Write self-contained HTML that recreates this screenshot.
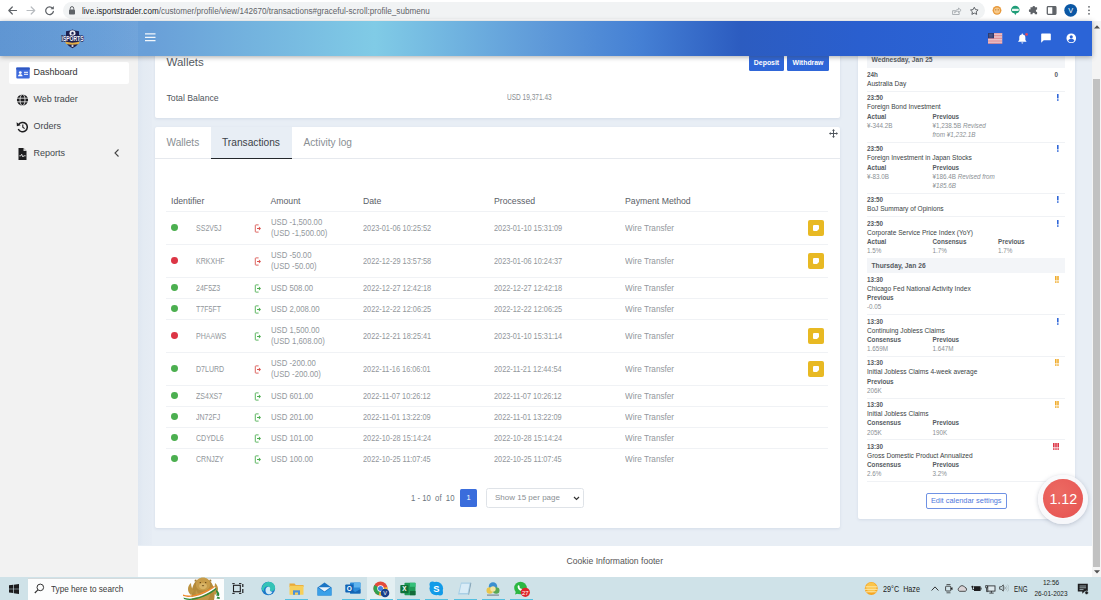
<!DOCTYPE html>
<html lang="en">
<head>
<meta charset="utf-8">
<title>Transactions</title>
<style>
*{box-sizing:border-box}
html,body{margin:0;padding:0}
body{width:1101px;height:600px;position:relative;overflow:hidden;background:#e8eef5;font-family:"Liberation Sans",sans-serif;color:#6c757d;font-size:8px}
.abs{position:absolute}
/* browser chrome */
#chrome{position:absolute;left:0;top:0;width:1101px;height:21px;background:#fff}
#urlpill{position:absolute;left:63px;top:2px;width:922px;height:17px;border-radius:9px;background:#f1f3f4}
#url{position:absolute;left:82px;top:5.5px;transform:scaleX(.978);transform-origin:0 50%;font-size:8.3px;line-height:11px;color:#5f6368;white-space:nowrap}
#url b{font-weight:normal;color:#202124}
/* header */
#header{position:absolute;left:0;top:21px;width:1091.5px;height:34.8px;background:linear-gradient(90deg,#6ba2da 0,#699fd8 150px,#80cbe6 375px,#5f9ad9 540px,#4580d4 640px,#2c5cc0 740px,#2a5fcf 860px,#2b64d7 980px,#2b64d7 100%);box-shadow:0 1px 5px rgba(60,62,66,.45);z-index:5}
#header .sb{position:absolute;left:0;top:0;width:138px;height:34.8px;background:linear-gradient(90deg,rgba(50,100,180,.2),rgba(80,130,200,.05) 70%,rgba(255,255,255,.05))}
/* sidebar */
#sidebar{position:absolute;left:0;top:55px;width:138px;height:522px;background:#f2f2f2}
#sideshadow{position:absolute;left:138px;top:55px;width:14px;height:490px;background:linear-gradient(90deg,#dfe7f1,#e4ebf3 40%,#e6ecf4)}
.nav{position:absolute;left:9px;width:120px;height:22px;border-radius:2px;font-size:9px;line-height:20.600px;color:#42474c;padding-left:24.500px;white-space:nowrap}
.nav.act{background:#fff;color:#333}
.nav svg{position:absolute;left:7px;top:5px}
/* cards */
.card{position:absolute;background:#fff;border-radius:2px;box-shadow:0 1px 3px rgba(120,140,170,.18)}
.btn{position:absolute;background:#2f66d8;color:#fff;font-size:6.9px;line-height:16px;text-align:center;border-radius:1.5px;font-weight:bold}
/* table */
.t{position:absolute;white-space:nowrap;font-size:8.8px;line-height:11px;color:#92979c;transform:scaleX(.88);transform-origin:0 50%}
.th{position:absolute;white-space:nowrap;font-size:8.7px;line-height:11px;color:#5a6067}
.hl{position:absolute;left:166px;width:662px;height:1px;background:#f0f2f5}
.dot{position:absolute;left:171.3px;width:6.9px;height:6.9px;border-radius:50%;margin-top:.3px}
.g{background:#4caf50}.r{background:#dc3545}
.note{position:absolute;left:808px;width:16px;height:16px;border-radius:2px;background:#e8b923}
.note i{position:absolute;left:4.6px;top:4.6px;width:6.8px;height:6.8px;background:#fff;border-radius:1px}
.note i:after{content:"";position:absolute;right:0;bottom:0;border-style:solid;border-width:0 0 2.4px 2.4px;border-color:transparent transparent #e8b923 transparent}
.t.i{transform:scaleX(.8)}.t.d{transform:scaleX(.835)}.t.w{transform:scaleX(.93)}
/* calendar panel */
#cal{position:absolute;left:858px;top:50px;width:216.5px;height:469px;background:#fff;border-radius:2px;box-shadow:0 1px 3px rgba(120,140,170,.18)}
.c{position:absolute;white-space:nowrap;font-size:6.3px;line-height:9px}
.cb{font-weight:bold;color:#555a61}
.cn{color:#3a3f45;font-size:6.6px}
.cv{color:#8a8f94}
.band{position:absolute;left:9px;width:197.5px;height:14.8px;background:#f3f5f8}
.sep{position:absolute;left:9px;width:197.5px;height:1px;background:#f0f2f5}
/* footer + taskbar */
#footer{position:absolute;left:138px;top:545.7px;width:953.5px;height:31.3px;background:#fff;text-align:center;font-size:8.6px;line-height:31px;color:#555}
#taskbar{position:absolute;left:0;top:577px;width:1101px;height:23px;background:#cfe2e8}
#scroll{position:absolute;left:1091.5px;top:21px;width:9.5px;height:556px;background:#f4f4f4}
#scroll i{position:absolute;left:1.8px;top:58px;width:6.4px;height:487.7px;background:#c1c1c1}
.tb{position:absolute;white-space:nowrap;color:#222;font-size:8px}
</style>
</head>
<body>
<div id="chrome">
  <div id="urlpill"></div>
  <svg class="abs" style="left:0;top:0" width="62" height="21" viewBox="0 0 62 21">
    <g fill="none" stroke="#5f6368" stroke-width="1.2" stroke-linecap="round" stroke-linejoin="round">
      <path d="M16.5 10.5H9M12.3 7l-3.5 3.5 3.500 3.500"/>
    </g>
    <g fill="none" stroke="#b8bcc0" stroke-width="1.2" stroke-linecap="round" stroke-linejoin="round">
      <path d="M27 10.5h7.500M31.200 7l3.500 3.500-3.500 3.500"/>
    </g>
    <g fill="none" stroke="#5f6368" stroke-width="1.25" stroke-linecap="round">
      <path d="M52.600 8.200A3.900 3.900 0 1 0 53.400 11.500"/>
    </g>
    <path d="M53.800 6v3.300h-3.300z" fill="#5f6368"/>
  </svg>
  <svg class="abs" style="left:68px;top:5px" width="8" height="11" viewBox="0 0 8 11"><rect x="1" y="4.500" width="6" height="5" rx=".8" fill="#5f6368"/><path d="M2.300 4.700V3.300a1.700 1.700 0 0 1 3.400 0v1.400" fill="none" stroke="#5f6368" stroke-width="1"/></svg>
  <svg class="abs" style="left:948px;top:3px" width="36" height="15" viewBox="0 0 36 15">
    <g fill="none" stroke="#a4a9ae" stroke-width=".9" stroke-linejoin="round" stroke-linecap="round">
      <path d="M7.300 7.700H4.600v3.800h6.600v-1.800"/><path d="M6.800 9.500c.3-2 1.700-3 3.700-3.100V5l2.600 2.300-2.600 2.300V8.200c-1.600 0-2.700.4-3.700 1.300z"/>
    </g>
    <path d="M26.300 4.200l1.200 2.400 2.600.4-1.900 1.800.5 2.600-2.400-1.300-2.400 1.300.5-2.600-1.900-1.800 2.600-.4z" fill="none" stroke="#5f6368" stroke-width="1" stroke-linejoin="round"/>
  </svg>
  <svg class="abs" style="left:988px;top:3px" width="113" height="16" viewBox="0 0 113 16">
    <circle cx="9" cy="7.300" r="4.400" fill="#e89a3c"/><circle cx="9" cy="7.500" r="3" fill="#f7c98a"/><circle cx="7.800" cy="6.800" r=".6" fill="#a8621a"/><circle cx="10.200" cy="6.800" r=".6" fill="#a8621a"/>
    <path d="M23 7a4.300 4.300 0 0 1 8.600 0c0 2-2 3.300-3.300 3.300l-1 2-1-2C25 10.300 23 9 23 7z" fill="#1f9d78"/><rect x="24" y="5.800" width="6.600" height="2.200" rx=".5" fill="#e8f5f0"/>
    <path d="M42 5.500h2a1.300 1.300 0 1 1 2.600 0h2v2.300a1.300 1.300 0 1 0 0 2.600v2.100h-2.300a1.200 1.200 0 1 0-2.300 0H42v-2.300a1.300 1.300 0 1 1 0-2.500z" fill="#5f6368" transform="translate(.5 -1.300)"/>
    <rect x="59.300" y="3.700" width="8.600" height="7.600" rx=".8" fill="none" stroke="#5f6368" stroke-width="1.300"/><rect x="64.300" y="3.700" width="3.600" height="7.600" fill="#5f6368"/>
    <circle cx="82.700" cy="7.300" r="6.400" fill="#0b57a4"/>
    <text x="82.700" y="9.900" font-size="7.300" fill="#fff" text-anchor="middle" font-family="Liberation Sans, sans-serif">V</text>
    <circle cx="101" cy="3.800" r=".9" fill="#5f6368"/><circle cx="101" cy="7.300" r=".9" fill="#5f6368"/><circle cx="101" cy="10.800" r=".9" fill="#5f6368"/>
  </svg>

  <div id="url"><b>live.isportstrader.com</b>/customer/profile/view/142670/transactions#graceful-scroll:profile_submenu</div>
</div>
<div id="header"><div class="sb"></div>
  <svg class="abs" style="left:59.500px;top:8px" width="25" height="20" viewBox="0 0 25 20">
    <path d="M12.500 .5c2.500 1.200 4.500 1.700 6.500 1.700v9.300c0 3.600-3 6-6.500 7.800C9 17.500 6 15.100 6 11.500V2.200c2 0 4-.5 6.500-1.700z" fill="#1d1f4f"/>
    <circle cx="12.500" cy="4.300" r="3" fill="#e9ebf2"/><path d="M12.500 2.800l1.400 1-.5 1.600h-1.800l-.5-1.600z" fill="#1d1f4f"/>
    <text x="12.500" y="11.800" font-size="6.600" font-weight="bold" fill="#f4f5fa" stroke="#1d1f4f" stroke-width="1.300" paint-order="stroke" text-anchor="middle" font-family="Liberation Sans, sans-serif" textLength="22" lengthAdjust="spacingAndGlyphs">iSPORTS</text>
    <path d="M5 12.600c5 1.400 10 1.400 15 0l-1.200 2.500c-4.200 1-8.400 1-12.600 0z" fill="#e0ad48"/>
    <path d="M12.500 15.600l.5 1h1l-.8.700.3 1-1-.6-1 .6.300-1-.8-.7h1z" fill="#e9ebf2"/>
  </svg>
  <svg class="abs" style="left:144.500px;top:11.800px" width="11" height="9" viewBox="0 0 11 9"><path d="M0 .9h10.500M0 4.300h10.500M0 7.700h10.500" stroke="#fff" stroke-width="1.300" opacity=".92"/></svg>
  <svg class="abs" style="left:988px;top:11.800px" width="14.500" height="11" viewBox="0 0 14.500 11">
    <rect width="14.200" height="10.600" fill="#f1e6ea"/>
    <path d="M0 .8h14.200M0 2.400h14.200M0 4h14.200M0 5.600h14.200M0 7.200h14.200M0 8.800h14.200M0 10.300h14.200" stroke="#d9707a" stroke-width=".8"/>
    <rect width="6" height="5.300" fill="#2f3a6e"/>
    <path d="M1 1.300h4M1 2.700h4M1 4h4" stroke="#9aa3c8" stroke-width=".5" stroke-dasharray=".6 .6"/>
  </svg>
  <svg class="abs" style="left:1016.500px;top:10.700px" width="13" height="13" viewBox="0 0 14 14">
    <path d="M5.700 2.600a3.300 3.300 0 0 1 3.300 3.300v2.800l1.200 1.400v.5H1.200v-.5l1.200-1.400V5.900a3.300 3.300 0 0 1 3.300-3.300z" fill="#fff"/><path d="M4.600 11.200h2.200a1.100 1.100 0 0 1-2.200 0z" fill="#fff"/><circle cx="5.700" cy="2.300" r=".8" fill="#fff"/>
    <circle cx="10.300" cy="2.600" r="1.500" fill="#e24a5a"/>
  </svg>
  <svg class="abs" style="left:1041px;top:12px" width="10" height="10" viewBox="0 0 11 11"><path d="M1 .5h9a.8.800 0 0 1 .8.800v6a.8.800 0 0 1-.8.800H3L.2 10.700V1.300A.8.800 0 0 1 1 .5z" fill="#fff"/></svg>
  <svg class="abs" style="left:1065.700px;top:11.800px" width="10.500" height="10.500" viewBox="0 0 11.400 11.400"><circle cx="5.700" cy="5.700" r="5.200" fill="#fff"/><circle cx="5.700" cy="4.200" r="1.700" fill="#2a62d6"/><path d="M2.300 8.300c.7-1.500 2-2 3.400-2s2.700.5 3.400 2a4.300 4.300 0 0 1-6.800 0z" fill="#2a62d6"/></svg>
</div>
<div id="sidebar">
  <div class="nav act" style="top:7px"><svg width="14" height="12" viewBox="0 0 14 12" style="left:6.500px;top:4.500px"><rect x=".3" y=".6" width="13.400" height="10.800" rx="1" fill="#3f6bdc"/><rect x=".3" y=".6" width="13.400" height="2" fill="#2f57c0"/><circle cx="4.300" cy="5.600" r="1.400" fill="#fff"/><path d="M2 9.300c.2-1.400 1-2 2.300-2s2.100.6 2.300 2z" fill="#fff"/><rect x="8" y="4.800" width="4" height="1" fill="#fff"/><rect x="8" y="6.800" width="4" height="1" fill="#fff"/></svg>Dashboard</div>
  <div class="nav" style="top:34px"><svg width="14" height="12" viewBox="0 0 14 12"><circle cx="6.500" cy="6" r="5.600" fill="#1d1d1f"/><g fill="none" stroke="#f2f2f2" stroke-width=".8"><ellipse cx="6.500" cy="6" rx="2.500" ry="5.600"/><path d="M.9 4.200h11.200M.9 7.800h11.200"/></g></svg>Web trader</div>
  <div class="nav" style="top:61px"><svg width="14" height="12" viewBox="0 0 14 12"><path d="M2.600 3.600A4.700 4.700 0 1 1 2.300 8" fill="none" stroke="#1d1d1f" stroke-width="1.500"/><path d="M.6 1.200l.3 4 3.800-.9z" fill="#1d1d1f"/><path d="M6.800 3.600v2.700l1.800 1.300" fill="none" stroke="#1d1d1f" stroke-width="1.100"/></svg>Orders</div>
  <div class="nav" style="top:88px"><svg width="14" height="12" viewBox="0 0 14 12"><path d="M2.500 0h5l3 3v9h-8z" fill="#1d1d1f"/><path d="M7.500 0v3h3z" fill="#f2f2f2" opacity=".85"/><path d="M3.300 7.800h1.600l.8-1.600 1.200 2.800.8-1.200h2" fill="none" stroke="#f2f2f2" stroke-width=".8"/></svg>Reports</div>
  <svg class="abs" style="left:113px;top:93px" width="8" height="10" viewBox="0 0 8 10"><path d="M5.500 1.500L2 5l3.500 3.500" fill="none" stroke="#444" stroke-width="1.100"/></svg>
</div>
<div id="sideshadow"></div>

<div class="card" style="left:155px;top:50px;width:685px;height:68px"></div>
<div class="abs" style="left:166.500px;top:54.500px;font-size:11.500px;line-height:14px;color:#555b62">Wallets</div>
<div class="abs" style="left:166.500px;top:93px;font-size:8.700px;line-height:11px;color:#50565d">Total Balance</div>
<div class="abs" style="left:506.600px;top:92.300px;font-size:8.600px;line-height:11px;color:#8a8f94;white-space:nowrap;transform:scaleX(.76);transform-origin:0 50%">USD 19,371.43</div>
<div class="btn" style="left:749px;top:55px;width:35px">Deposit</div>
<div class="btn" style="left:787px;top:55px;width:42px">Withdraw</div>

<div class="card" style="left:155px;top:126.500px;width:685px;height:401.500px"></div>
<div class="abs" style="left:155px;top:158px;width:685px;height:1px;background:#e6e9ee"></div>
<div class="abs" style="left:211px;top:127px;width:81px;height:31.500px;background:#e8eef5;border-bottom:1.300px solid #23272b"></div>
<div class="abs" style="left:166.500px;top:135.800px;font-size:10.100px;line-height:13px;color:#8a8f94">Wallets</div>
<div class="abs" style="left:222px;top:135.800px;font-size:10.200px;line-height:13px;color:#3c4248">Transactions</div>
<div class="abs" style="left:303.500px;top:135.800px;font-size:10.150px;line-height:13px;color:#8a8f94">Activity log</div>
<svg class="abs" style="left:829px;top:129px" width="9" height="9" viewBox="0 0 9 9"><path d="M4.500 0L6 1.700H5v2.300h2.300V3L9 4.500 7.300 6V5H5v2.300h1L4.500 9 3 7.300h1V5H1.700v1L0 4.500 1.700 3v1H4V1.700H3z" fill="#50565d"/></svg>

<div class="th" style="left:171px;top:195.500px">Identifier</div>
<div class="th" style="left:270.500px;top:195.500px">Amount</div>
<div class="th" style="left:363px;top:195.500px">Date</div>
<div class="th" style="left:494px;top:195.500px">Processed</div>
<div class="th" style="left:625px;top:195.500px">Payment Method</div>
<div class="hl" style="top:211.0px"></div>
<div class="dot g" style="top:224.2px"></div>
<div class="t i" style="left:196px;top:222.5px">SS2V5J</div>
<svg class="abs" style="left:254px;top:223.5px" width="8" height="9" viewBox="0 0 8 9"><path d="M4.600 .9H1.900a.6.600 0 0 0-.6.600v6a.6.600 0 0 0 .6.600h2.700" fill="none" stroke="#d9534f" stroke-width=".9"/><path d="M3 3.900h1.900V2.600L7 4.500 4.900 6.400V5.100H3z" fill="#d9534f"/></svg>
<div class="t" style="left:270.500px;top:217.0px">USD -1,500.00</div>
<div class="t" style="left:270.500px;top:228.0px">(USD -1,500.00)</div>
<div class="t d" style="left:363px;top:222.5px">2023-01-06 10:25:52</div>
<div class="t d" style="left:494px;top:222.5px">2023-01-10 15:31:09</div>
<div class="t w" style="left:625px;top:222.5px">Wire Transfer</div>
<div class="note" style="top:220.0px"><i></i></div>
<div class="hl" style="top:244.0px"></div>
<div class="dot r" style="top:257.2px"></div>
<div class="t i" style="left:196px;top:255.5px">KRKXHF</div>
<svg class="abs" style="left:254px;top:256.5px" width="8" height="9" viewBox="0 0 8 9"><path d="M4.600 .9H1.900a.6.600 0 0 0-.6.600v6a.6.600 0 0 0 .6.600h2.700" fill="none" stroke="#d9534f" stroke-width=".9"/><path d="M3 3.900h1.900V2.600L7 4.500 4.900 6.400V5.100H3z" fill="#d9534f"/></svg>
<div class="t" style="left:270.500px;top:250.0px">USD -50.00</div>
<div class="t" style="left:270.500px;top:261.0px">(USD -50.00)</div>
<div class="t d" style="left:363px;top:255.5px">2022-12-29 13:57:58</div>
<div class="t d" style="left:494px;top:255.5px">2023-01-06 10:24:37</div>
<div class="t w" style="left:625px;top:255.5px">Wire Transfer</div>
<div class="note" style="top:253.0px"><i></i></div>
<div class="hl" style="top:277.0px"></div>
<div class="dot g" style="top:284.2px"></div>
<div class="t i" style="left:196px;top:282.5px">24F5Z3</div>
<svg class="abs" style="left:254px;top:283.5px" width="8" height="9" viewBox="0 0 8 9"><path d="M4.600 .9H1.900a.6.600 0 0 0-.6.600v6a.6.600 0 0 0 .6.600h2.700" fill="none" stroke="#4caf50" stroke-width=".9"/><path d="M3 3.900h1.900V2.600L7 4.500 4.900 6.400V5.100H3z" fill="#4caf50"/></svg>
<div class="t" style="left:270.500px;top:282.5px">USD 508.00</div>
<div class="t d" style="left:363px;top:282.5px">2022-12-27 12:42:18</div>
<div class="t d" style="left:494px;top:282.5px">2022-12-27 12:42:18</div>
<div class="t w" style="left:625px;top:282.5px">Wire Transfer</div>
<div class="hl" style="top:298.0px"></div>
<div class="dot g" style="top:305.2px"></div>
<div class="t i" style="left:196px;top:303.5px">T7F5FT</div>
<svg class="abs" style="left:254px;top:304.5px" width="8" height="9" viewBox="0 0 8 9"><path d="M4.600 .9H1.900a.6.600 0 0 0-.6.600v6a.6.600 0 0 0 .6.600h2.700" fill="none" stroke="#4caf50" stroke-width=".9"/><path d="M3 3.900h1.900V2.600L7 4.500 4.900 6.400V5.100H3z" fill="#4caf50"/></svg>
<div class="t" style="left:270.500px;top:303.5px">USD 2,008.00</div>
<div class="t d" style="left:363px;top:303.5px">2022-12-22 12:06:25</div>
<div class="t d" style="left:494px;top:303.5px">2022-12-22 12:06:25</div>
<div class="t w" style="left:625px;top:303.5px">Wire Transfer</div>
<div class="hl" style="top:319.0px"></div>
<div class="dot r" style="top:332.2px"></div>
<div class="t i" style="left:196px;top:330.5px">PHAAWS</div>
<svg class="abs" style="left:254px;top:331.5px" width="8" height="9" viewBox="0 0 8 9"><path d="M4.600 .9H1.900a.6.600 0 0 0-.6.600v6a.6.600 0 0 0 .6.600h2.700" fill="none" stroke="#4caf50" stroke-width=".9"/><path d="M3 3.900h1.900V2.600L7 4.500 4.900 6.400V5.100H3z" fill="#4caf50"/></svg>
<div class="t" style="left:270.500px;top:325.0px">USD 1,500.00</div>
<div class="t" style="left:270.500px;top:336.0px">(USD 1,608.00)</div>
<div class="t d" style="left:363px;top:330.5px">2022-12-21 18:25:41</div>
<div class="t d" style="left:494px;top:330.5px">2023-01-10 15:31:14</div>
<div class="t w" style="left:625px;top:330.5px">Wire Transfer</div>
<div class="note" style="top:328.0px"><i></i></div>
<div class="hl" style="top:352.0px"></div>
<div class="dot g" style="top:365.2px"></div>
<div class="t i" style="left:196px;top:363.5px">D7LURD</div>
<svg class="abs" style="left:254px;top:364.5px" width="8" height="9" viewBox="0 0 8 9"><path d="M4.600 .9H1.900a.6.600 0 0 0-.6.600v6a.6.600 0 0 0 .6.600h2.700" fill="none" stroke="#d9534f" stroke-width=".9"/><path d="M3 3.900h1.900V2.600L7 4.500 4.900 6.400V5.100H3z" fill="#d9534f"/></svg>
<div class="t" style="left:270.500px;top:358.0px">USD -200.00</div>
<div class="t" style="left:270.500px;top:369.0px">(USD -200.00)</div>
<div class="t d" style="left:363px;top:363.5px">2022-11-16 16:06:01</div>
<div class="t d" style="left:494px;top:363.5px">2022-11-21 12:44:54</div>
<div class="t w" style="left:625px;top:363.5px">Wire Transfer</div>
<div class="note" style="top:361.0px"><i></i></div>
<div class="hl" style="top:385.0px"></div>
<div class="dot g" style="top:392.2px"></div>
<div class="t i" style="left:196px;top:390.5px">ZS4XS7</div>
<svg class="abs" style="left:254px;top:391.5px" width="8" height="9" viewBox="0 0 8 9"><path d="M4.600 .9H1.900a.6.600 0 0 0-.6.600v6a.6.600 0 0 0 .6.600h2.700" fill="none" stroke="#4caf50" stroke-width=".9"/><path d="M3 3.900h1.900V2.600L7 4.500 4.900 6.400V5.100H3z" fill="#4caf50"/></svg>
<div class="t" style="left:270.500px;top:390.5px">USD 601.00</div>
<div class="t d" style="left:363px;top:390.5px">2022-11-07 10:26:12</div>
<div class="t d" style="left:494px;top:390.5px">2022-11-07 10:26:12</div>
<div class="t w" style="left:625px;top:390.5px">Wire Transfer</div>
<div class="hl" style="top:406.0px"></div>
<div class="dot g" style="top:413.2px"></div>
<div class="t i" style="left:196px;top:411.5px">JN72FJ</div>
<svg class="abs" style="left:254px;top:412.5px" width="8" height="9" viewBox="0 0 8 9"><path d="M4.600 .9H1.900a.6.600 0 0 0-.6.600v6a.6.600 0 0 0 .6.600h2.700" fill="none" stroke="#4caf50" stroke-width=".9"/><path d="M3 3.900h1.900V2.600L7 4.500 4.900 6.400V5.100H3z" fill="#4caf50"/></svg>
<div class="t" style="left:270.500px;top:411.5px">USD 201.00</div>
<div class="t d" style="left:363px;top:411.5px">2022-11-01 13:22:09</div>
<div class="t d" style="left:494px;top:411.5px">2022-11-01 13:22:09</div>
<div class="t w" style="left:625px;top:411.5px">Wire Transfer</div>
<div class="hl" style="top:427.0px"></div>
<div class="dot g" style="top:434.2px"></div>
<div class="t i" style="left:196px;top:432.5px">CDYDL6</div>
<svg class="abs" style="left:254px;top:433.5px" width="8" height="9" viewBox="0 0 8 9"><path d="M4.600 .9H1.900a.6.600 0 0 0-.6.600v6a.6.600 0 0 0 .6.600h2.700" fill="none" stroke="#4caf50" stroke-width=".9"/><path d="M3 3.900h1.900V2.600L7 4.500 4.900 6.400V5.100H3z" fill="#4caf50"/></svg>
<div class="t" style="left:270.500px;top:432.5px">USD 101.00</div>
<div class="t d" style="left:363px;top:432.5px">2022-10-28 15:14:24</div>
<div class="t d" style="left:494px;top:432.5px">2022-10-28 15:14:24</div>
<div class="t w" style="left:625px;top:432.5px">Wire Transfer</div>
<div class="hl" style="top:448.0px"></div>
<div class="dot g" style="top:455.2px"></div>
<div class="t i" style="left:196px;top:453.5px">CRNJZY</div>
<svg class="abs" style="left:254px;top:454.5px" width="8" height="9" viewBox="0 0 8 9"><path d="M4.600 .9H1.900a.6.600 0 0 0-.6.600v6a.6.600 0 0 0 .6.600h2.700" fill="none" stroke="#4caf50" stroke-width=".9"/><path d="M3 3.900h1.900V2.600L7 4.500 4.900 6.400V5.100H3z" fill="#4caf50"/></svg>
<div class="t" style="left:270.500px;top:453.5px">USD 100.00</div>
<div class="t d" style="left:363px;top:453.5px">2022-10-25 11:07:45</div>
<div class="t d" style="left:494px;top:453.5px">2022-10-25 11:07:45</div>
<div class="t w" style="left:625px;top:453.5px">Wire Transfer</div>
<div class="t" style="left:411px;top:492.500px;color:#6c757d">1 - 10&nbsp;&nbsp;of&nbsp;&nbsp;10</div>
<div class="abs" style="left:460px;top:488.500px;width:17px;height:18.500px;background:#3a6ddc;border-radius:1.500px;color:#fff;font-size:7.500px;line-height:18.500px;text-align:center">1</div>
<div class="abs" style="left:486px;top:487.500px;width:97.500px;height:20.500px;border:1px solid #dfe3e8;border-radius:2.500px;background:#fff;font-size:8px;line-height:18.500px;color:#8a8f94;padding-left:8px">Show 15 per page</div>
<svg class="abs" style="left:573px;top:495.500px" width="7" height="5" viewBox="0 0 7 5"><path d="M1 1l2.500 2.500L6 1" fill="none" stroke="#333" stroke-width="1.200"/></svg>
<div id="cal">
<div class="band" style="top:3.0px;height:14.700px"></div>
<div class="c cb" style="left:13.500px;top:5px;font-size:6.700px">Wednesday, Jan 25</div>
<div class="c cb" style="left:9.0px;top:19.7px">24h</div>
<div class="c cb" style="left:196.500px;top:19.7px">0</div>
<div class="c cn" style="left:9.0px;top:28.8px">Australia Day</div>
<div class="sep" style="top:40.6px"></div>
<div class="c cb" style="left:9.0px;top:43.2px">23:50</div>
<svg class="abs" style="left:199.3px;top:44.2px" width="2.2" height="7" viewBox="0 0 2.2 7"><rect x="0.0" y="0" width="1.600" height="4.400" fill="#2f66d8"/><rect x="0.0" y="5.300" width="1.600" height="1.500" fill="#2f66d8"/></svg>
<div class="c cn" style="left:9.0px;top:52.3px">Foreign Bond Investment</div>
<div class="c cb" style="left:9.0px;top:61.5px">Actual</div>
<div class="c cb" style="left:74.5px;top:61.5px">Previous</div>
<div class="c cv" style="left:9.0px;top:70.7px">¥-344.2B</div>
<div class="c cv" style="left:74.5px;top:70.7px">¥1,238.5B <i>Revised</i></div>
<div class="c cv" style="left:74.5px;top:79.9px"><i>from ¥1,232.1B</i></div>
<div class="sep" style="top:91.7px"></div>
<div class="c cb" style="left:9.0px;top:94.2px">23:50</div>
<svg class="abs" style="left:199.3px;top:95.2px" width="2.2" height="7" viewBox="0 0 2.2 7"><rect x="0.0" y="0" width="1.600" height="4.400" fill="#2f66d8"/><rect x="0.0" y="5.300" width="1.600" height="1.500" fill="#2f66d8"/></svg>
<div class="c cn" style="left:9.0px;top:103.3px">Foreign Investment in Japan Stocks</div>
<div class="c cb" style="left:9.0px;top:112.5px">Actual</div>
<div class="c cb" style="left:74.5px;top:112.5px">Previous</div>
<div class="c cv" style="left:9.0px;top:121.7px">¥-83.0B</div>
<div class="c cv" style="left:74.5px;top:121.7px">¥186.4B <i>Revised from</i></div>
<div class="c cv" style="left:74.5px;top:130.9px"><i>¥185.6B</i></div>
<div class="sep" style="top:142.7px"></div>
<div class="c cb" style="left:9.0px;top:145.2px">23:50</div>
<svg class="abs" style="left:199.3px;top:146.2px" width="2.2" height="7" viewBox="0 0 2.2 7"><rect x="0.0" y="0" width="1.600" height="4.400" fill="#2f66d8"/><rect x="0.0" y="5.300" width="1.600" height="1.500" fill="#2f66d8"/></svg>
<div class="c cn" style="left:9.0px;top:154.3px">BoJ Summary of Opinions</div>
<div class="sep" style="top:166.2px"></div>
<div class="c cb" style="left:9.0px;top:168.7px">23:50</div>
<svg class="abs" style="left:199.3px;top:169.7px" width="2.2" height="7" viewBox="0 0 2.2 7"><rect x="0.0" y="0" width="1.600" height="4.400" fill="#2f66d8"/><rect x="0.0" y="5.300" width="1.600" height="1.500" fill="#2f66d8"/></svg>
<div class="c cn" style="left:9.0px;top:177.8px">Corporate Service Price Index (YoY)</div>
<div class="c cb" style="left:9.0px;top:187.0px">Actual</div>
<div class="c cb" style="left:74.5px;top:187.0px">Consensus</div>
<div class="c cb" style="left:140.0px;top:187.0px">Previous</div>
<div class="c cv" style="left:9.0px;top:196.2px">1.5%</div>
<div class="c cv" style="left:74.5px;top:196.2px">1.7%</div>
<div class="c cv" style="left:140.0px;top:196.2px">1.7%</div>
<div class="band" style="top:208.0px"></div>
<div class="c cb" style="left:13.500px;top:210.5px;font-size:6.700px">Thursday, Jan 26</div>
<div class="c cb" style="left:9.0px;top:224.7px">13:30</div>
<svg class="abs" style="left:197.1px;top:225.7px" width="4.4" height="7" viewBox="0 0 4.4 7"><rect x="0.0" y="0" width="1.600" height="4.400" fill="#f0ad2e"/><rect x="0.0" y="5.300" width="1.600" height="1.500" fill="#f0ad2e"/><rect x="2.2" y="0" width="1.600" height="4.400" fill="#f0ad2e"/><rect x="2.2" y="5.300" width="1.600" height="1.500" fill="#f0ad2e"/></svg>
<div class="c cn" style="left:9.0px;top:233.8px">Chicago Fed National Activity Index</div>
<div class="c cb" style="left:9.0px;top:243.0px">Previous</div>
<div class="c cv" style="left:9.0px;top:252.2px">-0.05</div>
<div class="sep" style="top:264.0px"></div>
<div class="c cb" style="left:9.0px;top:266.5px">13:30</div>
<svg class="abs" style="left:199.3px;top:267.5px" width="2.2" height="7" viewBox="0 0 2.2 7"><rect x="0.0" y="0" width="1.600" height="4.400" fill="#2f66d8"/><rect x="0.0" y="5.300" width="1.600" height="1.500" fill="#2f66d8"/></svg>
<div class="c cn" style="left:9.0px;top:275.6px">Continuing Jobless Claims</div>
<div class="c cb" style="left:9.0px;top:284.8px">Consensus</div>
<div class="c cb" style="left:74.5px;top:284.8px">Previous</div>
<div class="c cv" style="left:9.0px;top:294.0px">1.659M</div>
<div class="c cv" style="left:74.5px;top:294.0px">1.647M</div>
<div class="sep" style="top:305.8px"></div>
<div class="c cb" style="left:9.0px;top:308.3px">13:30</div>
<svg class="abs" style="left:197.1px;top:309.3px" width="4.4" height="7" viewBox="0 0 4.4 7"><rect x="0.0" y="0" width="1.600" height="4.400" fill="#f0ad2e"/><rect x="0.0" y="5.300" width="1.600" height="1.500" fill="#f0ad2e"/><rect x="2.2" y="0" width="1.600" height="4.400" fill="#f0ad2e"/><rect x="2.2" y="5.300" width="1.600" height="1.500" fill="#f0ad2e"/></svg>
<div class="c cn" style="left:9.0px;top:317.4px">Initial Jobless Claims 4-week average</div>
<div class="c cb" style="left:9.0px;top:326.6px">Previous</div>
<div class="c cv" style="left:9.0px;top:335.8px">206K</div>
<div class="sep" style="top:347.6px"></div>
<div class="c cb" style="left:9.0px;top:350.1px">13:30</div>
<svg class="abs" style="left:197.1px;top:351.1px" width="4.4" height="7" viewBox="0 0 4.4 7"><rect x="0.0" y="0" width="1.600" height="4.400" fill="#f0ad2e"/><rect x="0.0" y="5.300" width="1.600" height="1.500" fill="#f0ad2e"/><rect x="2.2" y="0" width="1.600" height="4.400" fill="#f0ad2e"/><rect x="2.2" y="5.300" width="1.600" height="1.500" fill="#f0ad2e"/></svg>
<div class="c cn" style="left:9.0px;top:359.2px">Initial Jobless Claims</div>
<div class="c cb" style="left:9.0px;top:368.4px">Consensus</div>
<div class="c cb" style="left:74.5px;top:368.4px">Previous</div>
<div class="c cv" style="left:9.0px;top:377.6px">205K</div>
<div class="c cv" style="left:74.5px;top:377.6px">190K</div>
<div class="sep" style="top:389.4px"></div>
<div class="c cb" style="left:9.0px;top:391.9px">13:30</div>
<svg class="abs" style="left:194.9px;top:392.9px" width="6.6" height="7" viewBox="0 0 6.6 7"><rect x="0.0" y="0" width="1.600" height="4.400" fill="#dc3545"/><rect x="0.0" y="5.300" width="1.600" height="1.500" fill="#dc3545"/><rect x="2.2" y="0" width="1.600" height="4.400" fill="#dc3545"/><rect x="2.2" y="5.300" width="1.600" height="1.500" fill="#dc3545"/><rect x="4.4" y="0" width="1.600" height="4.400" fill="#dc3545"/><rect x="4.4" y="5.300" width="1.600" height="1.500" fill="#dc3545"/></svg>
<div class="c cn" style="left:9.0px;top:401.0px">Gross Domestic Product Annualized</div>
<div class="c cb" style="left:9.0px;top:410.2px">Consensus</div>
<div class="c cb" style="left:74.5px;top:410.2px">Previous</div>
<div class="c cv" style="left:9.0px;top:419.4px">2.6%</div>
<div class="c cv" style="left:74.5px;top:419.4px">3.2%</div>
<div class="sep" style="top:431.2px"></div>
<div class="abs" style="left:67.500px;top:443px;width:81.500px;height:16.200px;border:1px solid #6f92e4;border-radius:2px;color:#4f78dc;font-size:7.400px;line-height:14px;text-align:center;white-space:nowrap">Edit calendar settings</div>
</div>
<div class="abs" style="left:1038px;top:474.500px;width:49.500px;height:49px;border-radius:50%;background:rgba(248,248,250,.88);box-shadow:0 1px 4px rgba(130,140,160,.45);z-index:6"></div>
<div class="abs" style="left:1043px;top:479px;width:39.700px;height:39.400px;border-radius:50%;background:radial-gradient(circle at 40% 35%,#ec6a62 0,#e95d59 55%,#e4504e 100%);z-index:7;color:#fff;font-size:14.300px;line-height:40px;text-align:center;padding-left:1px">1.12</div>
<div id="scroll"><i></i><svg class="abs" style="left:2.200px;top:3.500px" width="6" height="4" viewBox="0 0 6 4"><path d="M0 3.500L3 .3l3 3.200z" fill="#505050"/></svg><svg class="abs" style="left:2.200px;top:549px" width="6" height="4" viewBox="0 0 6 4"><path d="M0 .3h6L3 3.500z" fill="#505050"/></svg></div>
<div id="footer">Cookie Information footer</div>
<div id="taskbar">
  <svg class="abs" style="left:9px;top:6.800px" width="10" height="10" viewBox="0 0 11 11"><path d="M0 1.500L4.600.9v4.200H0zM5.300.800L11 0v5.100H5.300zM0 5.800h4.600V10L0 9.400zM5.300 5.800H11V11l-5.700-.8z" fill="#1b1b1d"/></svg>
  <div class="abs" style="left:28px;top:.5px;width:196px;height:22.500px;background:#fcfdfd;border-top:.6px solid #d5dadc"></div>
  <svg class="abs" style="left:34px;top:6px" width="11" height="11" viewBox="0 0 11 11"><circle cx="6.300" cy="4.400" r="3.300" fill="none" stroke="#333" stroke-width="1"/><path d="M3.900 6.800L.8 10" stroke="#333" stroke-width="1.100"/></svg>
  <div class="tb" style="left:50.500px;top:7px;font-size:8.800px;line-height:11px;color:#3a3a3a;transform:scaleX(.93);transform-origin:0 50%">Type here to search</div>
  <svg class="abs" style="left:182px;top:0" width="42" height="23" viewBox="0 0 42 23">
    <path d="M10 23c-2-8 1-17 5-20 2-1.500 10-1.500 12 0 4 3 7 12 5 20z" fill="#b48a3a"/>
    <path d="M15 3c-2-1.500-3 0-2 2zM27 3c2-1.500 3 0 2 2z" fill="#a57c30"/>
    <path d="M14 6.500c.5-4 3.500-6 7-6s6.500 2 7 6c.5 3.500-1.500 7-7 7s-7.500-3.500-7-7z" fill="#c79c49"/>
    <path d="M17 9c0-1.800 1.800-3 4-3s4 1.200 4 3-1.800 3.200-4 3.200-4-1.400-4-3.200z" fill="#d8b466"/>
    <circle cx="18.300" cy="5.600" r=".7" fill="#5a3d12"/><circle cx="23.700" cy="5.600" r=".7" fill="#5a3d12"/><path d="M19.700 8.200h2.600L21 9.600z" fill="#5a3d12"/>
    <path d="M9 18c-4-3-4-9 0-12 0 3 1 6 3 8z" fill="#bd9340"/><path d="M33 18c4-3 4-9 0-12 0 3-1 6-3 8z" fill="#bd9340"/>
    <path d="M14 13c2 4 5 6 7 6s5-2 7-6c1 3 0 7-2 10H16c-2-3-3-7-2-10z" fill="#c39846"/>
    <path d="M1 17.500c8 3.500 21-2 31-8.500l.9 1C23 17 9 22 1 19z" fill="#ef8a2e"/>
    <path d="M1 19c8 3.500 22-1.500 31.900-9l.9 1C24 18.500 10 23.500 1.500 20.500z" fill="#fdfdfd"/>
    <path d="M1.500 20.500c8 3.500 22.500-1.500 32.300-9.500l1 1C25 20 11 25 2 22z" fill="#2f8a3a"/>
    <path d="M34 13c2.500 1 4 3.500 3 6l-3-.5c1-1.500 1-3 0-4z" fill="#2f8a3a"/>
    <path d="M35.500 19.500l2.500 1-.5 1.500-3-.5z" fill="#2f8a3a"/>
  </svg>
  <g></g>
  <!-- task view -->
  <svg class="abs" style="left:232px;top:6px" width="13" height="11" viewBox="0 0 13 11"><rect x="1.500" y="2.300" width="6.800" height="6.400" fill="none" stroke="#1d1d1f" stroke-width="1.100"/><path d="M.3.600h2.400M.3 10.400h2.400M7 .6h2.400M7 10.400h2.400" stroke="#1d1d1f" stroke-width="1"/><path d="M10.800 1v3M10.800 6v4" stroke="#1d1d1f" stroke-width="1.200"/></svg>
  <!-- edge -->
  <svg class="abs" style="left:261px;top:4px" width="15" height="15" viewBox="0 0 15 15"><circle cx="7.300" cy="7.500" r="6.800" fill="#1a78c9"/><path d="M.7 8.500C1 4 4 1 7.500.8c4 0 6.600 3 6.600 5.900 0 2-1.500 3.300-3.400 3.300-1.600 0-2.400-.8-2-1.600.7-1.400-.2-3-2-3-2.500 0-4.200 2-3.600 5z" fill="#35c3b6"/><path d="M4.500 9c0-2 1.400-3.400 3-3.300 1.300.1 2 1.200 1.500 2.500-.5 1.300.7 2.700 2.600 2.500-1 2-3 3-5 2.400C5.300 12.600 4.500 11 4.500 9z" fill="#cfe9f6"/></svg>
  <!-- folder -->
  <svg class="abs" style="left:288.500px;top:4.500px" width="15" height="14" viewBox="0 0 15 14"><path d="M.5 1.500h5l1.300 1.500h7.700v2H.5z" fill="#e9a93a"/><rect x=".5" y="3.800" width="14" height="9" rx=".6" fill="#f7cf5a"/><rect x="4" y="8.300" width="7" height="4.500" fill="#4a90d9"/><rect x="6" y="10.500" width="3" height="2.300" fill="#f7cf5a"/></svg>
  <!-- mail -->
  <svg class="abs" style="left:316.500px;top:4.500px" width="15" height="14" viewBox="0 0 15 14"><path d="M7.500.5l7 5v8H.5v-8z" fill="#1b74c4"/><path d="M.5 5.500l7 4.700 7-4.700v8H.5z" fill="#3aa0e8"/><path d="M1.600 5.300h11.800L7.500 9.600z" fill="#e9f3fb"/></svg>
  <!-- outlook -->
  <svg class="abs" style="left:344.500px;top:4px" width="16" height="15" viewBox="0 0 16 15"><rect x="5" y="1.500" width="10.500" height="11" rx=".8" fill="#2a8ad8"/><rect x="9" y="1.500" width="6.500" height="5" fill="#5fb4ee"/><path d="M5 8l5.300 3 5.200-3v4.500H5z" fill="#1566b4"/><rect x=".3" y="3.500" width="8" height="8" rx=".8" fill="#0f63b5"/><text x="4.300" y="10" font-size="6.500" font-weight="bold" fill="#fff" text-anchor="middle" font-family="Liberation Sans, sans-serif">O</text></svg>
  <!-- chrome active bg -->
  <div class="abs" style="left:367px;top:0;width:27.500px;height:23px;background:#e3eff2"></div>
  <svg class="abs" style="left:372.500px;top:3.500px" width="17" height="17" viewBox="0 0 17 17"><circle cx="7.500" cy="7.500" r="7" fill="#e24a3b"/><path d="M7.500 7.500L1.400 4A7 7 0 0 0 6 14.300z" fill="#2fa24f"/><path d="M7.500 7.500l-1.500 6.800A7 7 0 0 0 14.300 6z" fill="#f7c52f"/><circle cx="7.500" cy="7.500" r="3.200" fill="#fff"/><circle cx="7.500" cy="7.500" r="2.500" fill="#3f7fe3"/><circle cx="12" cy="12" r="4.300" fill="#173d8a"/><text x="12" y="14" font-size="5.500" fill="#fff" text-anchor="middle" font-family="Liberation Sans, sans-serif">V</text></svg>
  <!-- excel -->
  <svg class="abs" style="left:400px;top:4.500px" width="16" height="14" viewBox="0 0 16 14"><rect x="4.500" y=".8" width="11" height="12.400" rx=".8" fill="#1f9b57"/><rect x="10" y=".8" width="5.500" height="4" fill="#35c07a"/><rect x="10" y="9" width="5.500" height="4.200" fill="#146b3a"/><rect x=".3" y="3" width="8.200" height="8.200" rx=".8" fill="#0e7239"/><text x="4.400" y="9.400" font-size="6.300" font-weight="bold" fill="#fff" text-anchor="middle" font-family="Liberation Sans, sans-serif">X</text></svg>
  <!-- skype -->
  <svg class="abs" style="left:429px;top:4px" width="15" height="15" viewBox="0 0 15 15"><circle cx="7.300" cy="7.500" r="6.800" fill="#139be8"/><circle cx="3.500" cy="3.500" r="3" fill="#139be8"/><circle cx="11" cy="11.500" r="3" fill="#139be8"/><text x="7.300" y="10.800" font-size="9.300" font-weight="bold" fill="#fff" text-anchor="middle" font-family="Liberation Sans, sans-serif">S</text></svg>
  <!-- notepad -->
  <svg class="abs" style="left:456.500px;top:4px" width="15" height="15" viewBox="0 0 15 15"><path d="M4 1.500h9.500L11.300 13.500H1z" fill="#a9cfe6"/><path d="M4.500 2.800h8L10.700 12H2.500z" fill="#d9ecf7"/><path d="M13.500 1.500l.8.600L12 14l-.7-.5z" fill="#7f9fb3"/></svg>
  <!-- mt -->
  <svg class="abs" style="left:484.500px;top:3.500px" width="16" height="16" viewBox="0 0 16 16"><circle cx="8" cy="5.500" r="4.200" fill="#3b8fd0"/><circle cx="4.800" cy="9.500" r="3.300" fill="#e9c54a"/><circle cx="11.200" cy="9.500" r="3.300" fill="#5aa852"/><circle cx="8" cy="8" r="2.700" fill="#f2e4a2"/><path d="M2 13.500h12v1.200H2z" fill="#7a8a96"/></svg>
  <!-- whatsapp -->
  <svg class="abs" style="left:512.500px;top:3.500px" width="18" height="17" viewBox="0 0 18 17"><circle cx="7.500" cy="7" r="6.300" fill="#2cb742"/><path d="M2 13.500l1-3.300 2.300 2.300z" fill="#2cb742"/><path d="M5 4.500c.5-.6 1.200-.3 1.500.5.300.8-.3 1 .3 1.800.6.800 1.100 1.100 1.700 1 .6-.1 1.300.6 1 1.200-.4.700-1.400.9-2.500.4C5.300 8.600 4 6 5 4.500z" fill="#fff"/><circle cx="12.300" cy="11.300" r="4.600" fill="#e0242b"/><text x="12.300" y="13.500" font-size="6" fill="#fff" text-anchor="middle" font-family="Liberation Sans, sans-serif">27</text></svg>
  <div class="abs" style="left:285.0px;top:21.500px;width:23px;height:1.500px;background:#55bfe0"></div>
  <div class="abs" style="left:341.5px;top:21.500px;width:23px;height:1.500px;background:#55bfe0"></div>
  <div class="abs" style="left:369.5px;top:21.500px;width:23px;height:1.500px;background:#55bfe0"></div>
  <div class="abs" style="left:396.5px;top:21.500px;width:23px;height:1.500px;background:#55bfe0"></div>
  <div class="abs" style="left:425.0px;top:21.500px;width:23px;height:1.500px;background:#55bfe0"></div>
  <div class="abs" style="left:453.5px;top:21.500px;width:23px;height:1.500px;background:#55bfe0"></div>
  <div class="abs" style="left:481.5px;top:21.500px;width:23px;height:1.500px;background:#55bfe0"></div>
  <div class="abs" style="left:510.0px;top:21.500px;width:23px;height:1.500px;background:#55bfe0"></div>

  <svg class="abs" style="left:864px;top:3.500px" width="15" height="15" viewBox="0 0 15 15"><circle cx="7.300" cy="7.500" r="6.500" fill="#f6a623"/><circle cx="7.300" cy="6.500" r="5" fill="#fbc54a"/><path d="M1.500 5.800h11.600M1 8.300h12.600M2 10.800h10.600" stroke="#fde7a8" stroke-width="1"/></svg>
  <div class="tb" style="left:882.500px;top:6.500px;font-size:8.800px;line-height:11px;transform:scaleX(.82);transform-origin:0 50%">29°C&nbsp; Haze</div>
  <svg class="abs" style="left:930.500px;top:9px" width="8" height="5" viewBox="0 0 8 5"><path d="M.6 4.500L4 .9l3.400 3.600" fill="none" stroke="#222" stroke-width=".9"/></svg>
  <svg class="abs" style="left:944.500px;top:7px" width="8" height="10" viewBox="0 0 8 10"><path d="M1.500.5h4" stroke="#222" stroke-width=".7"/><rect x=".6" y="2.200" width="5.200" height="4.800" rx=".8" fill="none" stroke="#222" stroke-width=".8"/><path d="M5.800 4l1.700-.8v2.800l-1.700-.8z" fill="#222"/><path d="M1.500 8.800h4" stroke="#222" stroke-width=".7"/></svg>
  <svg class="abs" style="left:957px;top:8px" width="11" height="7" viewBox="0 0 11 7"><path d="M2.600 6.300A2 2 0 0 1 2.300 2.600 3 3 0 0 1 7.800 2.300 2.100 2.100 0 0 1 8.300 6.300z" fill="#d9d3d6" stroke="#2a2a2a" stroke-width=".8"/></svg>
  <svg class="abs" style="left:971px;top:8px" width="11" height="7" viewBox="0 0 11 7"><rect x="3" y="1.200" width="6.600" height="4.800" fill="#1d1d1f"/><rect x="9.600" y="2.600" width=".9" height="2" fill="#1d1d1f"/><circle cx="1.500" cy="1.800" r="1.100" fill="#1d1d1f"/><path d="M1.500 2v2.500h2" stroke="#1d1d1f" stroke-width=".8" fill="none"/></svg>
  <svg class="abs" style="left:984.500px;top:7.500px" width="11" height="9" viewBox="0 0 11 9"><rect x="2.800" y=".9" width="7.200" height="5.200" fill="#dfeaee" stroke="#1d1d1f" stroke-width=".8"/><path d="M6.400 6.100v1.700M4.300 8.100h4.400" stroke="#1d1d1f" stroke-width=".8"/><path d="M.6.600h1.800v2.200H.6zM1.500 2.800v3.800h1.800" stroke="#1d1d1f" stroke-width=".7" fill="none"/></svg>
  <svg class="abs" style="left:998.500px;top:7px" width="10" height="8" viewBox="0 0 10 8"><path d="M.6 2.800h1.600L4.300.9v6.200L2.200 5.200H.6z" fill="none" stroke="#2a2a2a" stroke-width=".75"/><path d="M5.600 2.600a2 2 0 0 1 0 2.800" fill="none" stroke="#555" stroke-width=".6"/><path d="M7 1.500a3.600 3.600 0 0 1 0 5M8.500.5a5 5 0 0 1 0 7" fill="none" stroke="#9aa8ad" stroke-width=".55"/></svg>
  <div class="tb" style="left:1013.500px;top:6.500px;font-size:8.200px;line-height:11px;transform:scaleX(.76);transform-origin:0 50%">ENG</div>
  <div class="tb" style="left:1030.500px;top:1.200px;width:40px;text-align:center;font-size:7.800px;line-height:10px;transform:scaleX(.83)">12:56</div>
  <div class="tb" style="left:1030.500px;top:11.500px;width:40px;text-align:center;font-size:7.800px;line-height:10px;transform:scaleX(.83)">26-01-2023</div>
  <svg class="abs" style="left:1077px;top:5.500px" width="12" height="12" viewBox="0 0 12 12"><path d="M.8.800h10v7.700H7.500L5.300 10.800V8.500H.8z" fill="#1d1d1f"/><path d="M2.500 3h6.600M2.500 4.800h6.600M2.500 6.600h4" stroke="#cfe2e8" stroke-width=".7"/><circle cx="9.600" cy="9.800" r="1.800" fill="#1d1d1f" stroke="#cfe2e8" stroke-width=".6"/></svg>
</div>
</body>
</html>
